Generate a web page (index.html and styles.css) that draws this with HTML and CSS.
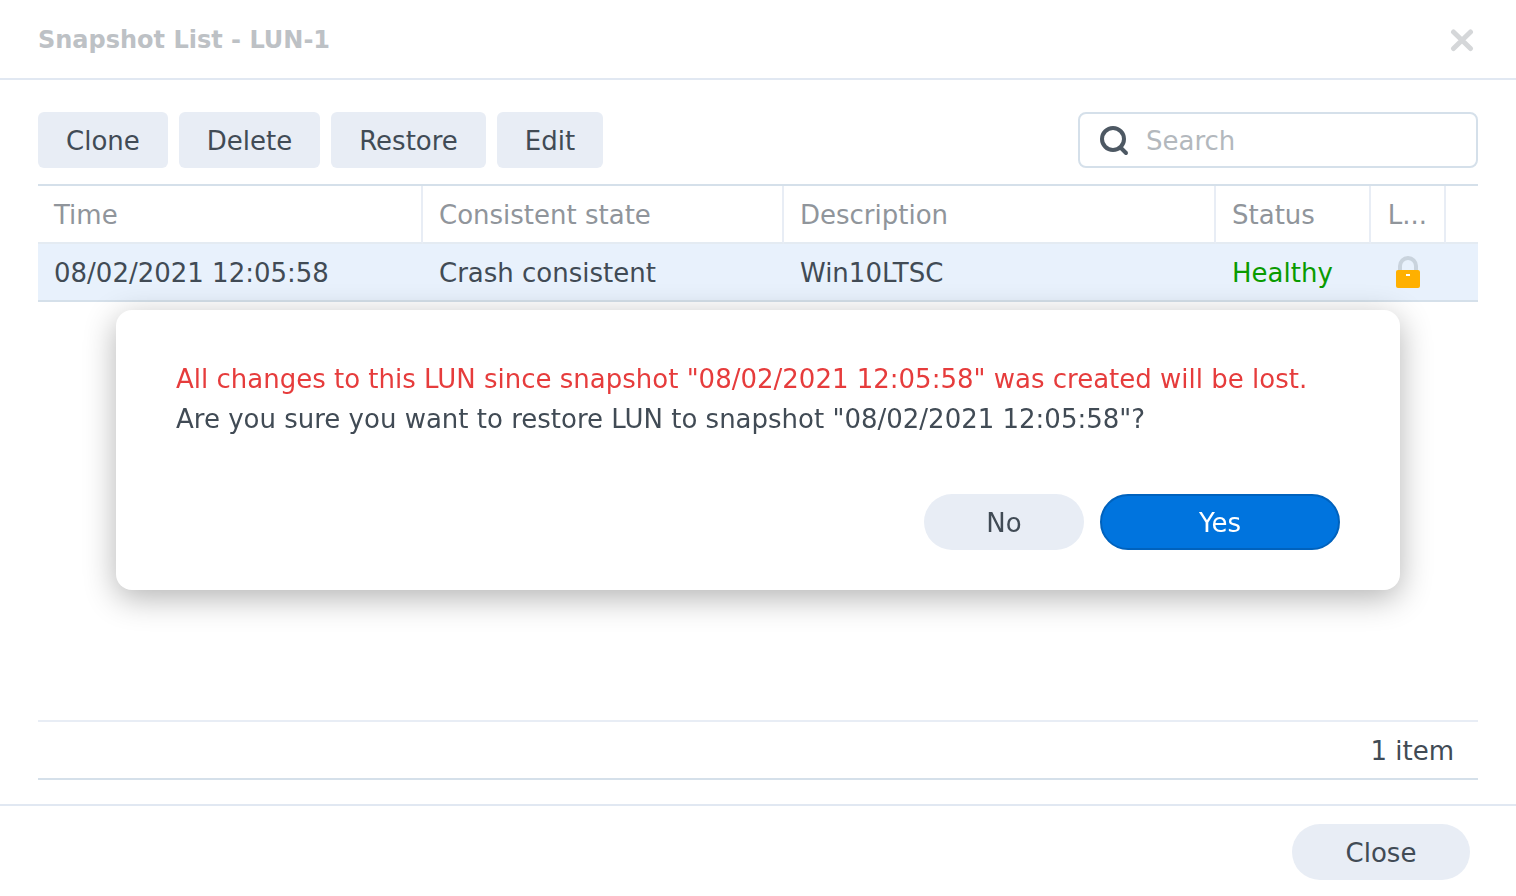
FILE: index.html
```html
<!DOCTYPE html>
<html lang="en">
	<head>
		<meta charset="utf-8">
		<meta name="viewport" content="width=device-width, initial-scale=1">
		<title>Snapshot List - LUN-1</title>
		<link rel="stylesheet" href="styles.css">
	</head>
	<body>
		<header class="titlebar">
			<h1>Snapshot List - LUN-1</h1>
			<button type="button" class="close-icon" aria-label="Close window">
				<svg width="24" height="24" viewBox="0 0 24 24"><path d="M3.500 4L20.500 20.500M20.500 4L3.500 20.500" /></svg>
			</button>
		</header>

		<main class="content">
			<div class="toolbar">
				<button type="button" class="tool">Clone</button>
				<button type="button" class="tool">Delete</button>
				<button type="button" class="tool">Restore</button>
				<button type="button" class="tool">Edit</button>
				<label class="search">
					<svg width="32" height="32" viewBox="0 0 32 32"><circle cx="15" cy="15" r="11" /><path d="M22.500 23.500L28 29" /></svg>
					<input type="search" placeholder="Search" aria-label="Search">
				</label>
			</div>

			<table class="grid">
				<colgroup>
					<col class="col-time">
					<col class="col-state">
					<col>
					<col class="col-status">
					<col class="col-lock">
					<col class="col-end">
				</colgroup>
				<thead>
					<tr>
						<th>Time</th>
						<th>Consistent state</th>
						<th>Description</th>
						<th>Status</th>
						<th class="lock-head">L...</th>
						<th></th>
					</tr>
				</thead>
				<tbody>
					<tr>
						<td>08/02/2021 12:05:58</td>
						<td>Crash consistent</td>
						<td>Win10LTSC</td>
						<td class="healthy">Healthy</td>
						<td class="lock">
							<svg width="24" height="32" viewBox="0 0 24 32" role="img" aria-label="Locked">
								<path class="shackle" d="M4 16V10a8 8 0 0 1 16 0v6" />
								<rect class="lock-body" y="14" width="24" height="18" rx="2" />
								<rect class="keyhole" x="10" y="18" width="4" height="2" />
							</svg>
						</td>
						<td></td>
					</tr>
				</tbody>
			</table>

			<div class="statusbar">1 item</div>
		</main>

		<footer class="footer">
			<button type="button" class="pill close">Close</button>
		</footer>

		<div class="overlay">
			<div class="dialog" role="alertdialog" aria-modal="true" aria-describedby="message">
				<div id="message">
					<p class="warning">All changes to this LUN since snapshot "08/02/2021 12:05:58" was created will be lost.</p>
					<p>Are you sure you want to restore LUN to snapshot "08/02/2021 12:05:58"?</p>
				</div>
				<div class="actions">
					<button type="button" class="pill no">No</button>
					<button type="button" class="pill yes">Yes</button>
				</div>
			</div>
		</div>
	</body>
</html>
```
FILE: styles.css
```css
* {
	box-sizing: border-box;
}
body {
	display: flex;
	flex-direction: column;
	min-height: 100vh;
	margin: 0;
	background: #fff;
	color: #414b55;
	font-family: Verdana, "DejaVu Sans", sans-serif;
	font-size: 26px;
	line-height: 40px;
}
button, input {
	font: inherit;
	color: inherit;
}
button {
	height: 56px;
	padding: 2px 28px 0;
	border: 0;
	background: #e8edf5;
	cursor: pointer;
}
h1, p {
	margin: 0;
}

.titlebar {
	display: flex;
	align-items: center;
	justify-content: space-between;
	height: 80px;
	padding: 2px 38px 0;
	border-bottom: 2px solid #e1e8f2;
}
.titlebar h1 {
	font-size: 24px;
	color: #bdc1c5;
}
.close-icon {
	display: flex;
	align-items: center;
	height: 32px;
	padding: 0 4px;
	background: none;
}
.close-icon path {
	fill: none;
	stroke: #d5d7d9;
	stroke-width: 5;
	stroke-linecap: round;
}

.content {
	display: flex;
	flex: 1;
	flex-direction: column;
	padding: 32px 38px 24px;
}
.toolbar {
	display: flex;
	gap: 11px;
	margin-bottom: 16px;
}
.tool {
	border-radius: 6px;
}
.search {
	display: flex;
	align-items: center;
	gap: 16px;
	width: 400px;
	height: 56px;
	margin-left: auto;
	padding: 0 16px 0 18px;
	border: 2px solid #d5e0ea;
	border-radius: 8px;
}
.search svg {
	flex: none;
	fill: none;
	stroke: #4d5863;
	stroke-width: 4;
	stroke-linecap: round;
}
.search input {
	flex: 1;
	min-width: 0;
	padding: 2px 0 0;
	border: 0;
	outline: 0;
	background: none;
}
.search input::placeholder {
	color: #b3b8bd;
	opacity: 1;
}

.grid {
	width: 100%;
	table-layout: fixed;
	border-collapse: separate;
	border-spacing: 0;
	border-top: 2px solid #d5e0ea;
}
.col-time {
	width: 385px;
}
.col-state {
	width: 361px;
}
.col-status {
	width: 155px;
}
.col-lock {
	width: 75px;
}
.col-end {
	width: 32px;
}
.grid th, .grid td {
	height: 58px;
	padding: 2px 0 0 16px;
	text-align: left;
	white-space: nowrap;
}
.grid th {
	color: #90959b;
	font-weight: normal;
	border-right: 2px solid #e8edf5;
	border-bottom: 2px solid #e4ebf2;
}
.grid th:last-child {
	border-right: 0;
}
.grid td {
	background: #e8f1fc;
	border-bottom: 2px solid #d5e0ea;
}
.grid .healthy {
	color: #0a9b00;
}
.grid .lock-head {
	padding-left: 0;
	text-align: center;
}
.grid .lock {
	padding: 0 2px 0 0;
}
.lock svg {
	display: block;
	margin: 0 auto;
}
.shackle {
	fill: none;
	stroke: #c9d3dd;
	stroke-width: 4;
}
.lock-body {
	fill: #ffb000;
}
.keyhole {
	fill: #fff;
}

.statusbar {
	height: 60px;
	margin-top: auto;
	padding: 9px 24px;
	border-top: 2px solid #e8edf5;
	border-bottom: 2px solid #d5e0ea;
	text-align: right;
}
.footer {
	display: flex;
	justify-content: flex-end;
	padding: 18px 46px 16px;
	border-top: 2px solid #e1e8f2;
}

.pill {
	border-radius: 28px;
}
.close {
	width: 178px;
}
.overlay {
	position: fixed;
	inset: 0;
	display: flex;
	align-items: center;
	justify-content: center;
	padding-top: 4px;
}
.dialog {
	width: 1284px;
	max-width: 94%;
	padding: 49px 60px 40px;
	border-radius: 16px;
	background: #fff;
	box-shadow: 0 8px 32px rgba(0, 0, 0, 0.3);
}
.warning {
	color: #e63c3c;
}
.actions {
	display: flex;
	justify-content: flex-end;
	gap: 16px;
	margin-top: 55px;
}
.no {
	width: 160px;
}
.yes {
	width: 240px;
	border: 2px solid #0062bd;
	background: #0074de;
	color: #fff;
}
```
